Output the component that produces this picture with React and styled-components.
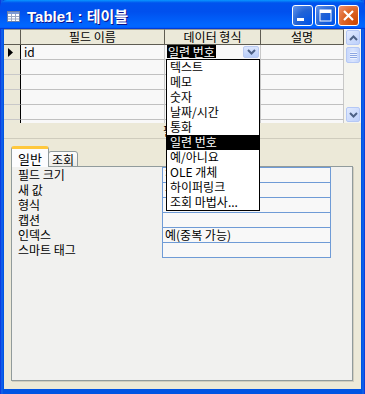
import React from "react";
import styled, { createGlobalStyle } from "styled-components";

const GlobalStyle = createGlobalStyle`
  html, body { margin: 0; padding: 0; background: #fff; }
  body {
    font-family: "Noto Sans CJK KR", "Liberation Sans", sans-serif;
    font-size: 12px;
    color: #000;
  }
`;

const types = ["텍스트", "메모", "숫자", "날짜/시간", "통화", "일련 번호", "예/아니요", "OLE 개체", "하이퍼링크", "조회 마법사..."];

const props = [
  { label: "필드 크기", value: "정수(Long)" },
  { label: "새 값", value: "증분" },
  { label: "형식", value: "" },
  { label: "캡션", value: "" },
  { label: "인덱스", value: "예(중복 가능)" },
  { label: "스마트 태그", value: "" },
];

const Chevron = ({ up }) => (
  <svg width="9" height="6" viewBox="0 0 9 6">
    <path d={up ? "M1 5 L4.5 1.5 L8 5" : "M1 1 L4.5 4.5 L8 1"} fill="none" stroke="#4d6185" strokeWidth="2" />
  </svg>
);

const App = () => {
  return (
    <>
      <GlobalStyle />
      <Window>
        <TitleBar>
          <TitleIcon width="13" height="11" viewBox="0 0 13 11">
            <rect x="0.5" y="0.5" width="12" height="10" fill="#fff" stroke="#6b7fa8" />
            <rect x="1" y="1" width="11" height="2" fill="#7d9ad6" />
            <path d="M1 5.5 H12 M1 8 H12 M4.5 3 V10 M8.5 3 V10" stroke="#9aa7c2" strokeWidth="1" />
          </TitleIcon>
          <Title>Table1 : 테이블</Title>
          <Buttons>
            <CapButton>
              <svg width="21" height="21" viewBox="0 0 21 21">
                <rect x="5" y="13" width="7" height="3" fill="#fff" />
              </svg>
            </CapButton>
            <CapButton>
              <svg width="21" height="21" viewBox="0 0 21 21">
                <rect x="5" y="5" width="11" height="11" fill="none" stroke="#fff" strokeWidth="1" />
                <rect x="5" y="5" width="11" height="3" fill="#fff" />
              </svg>
            </CapButton>
            <CapButton $close>
              <svg width="21" height="21" viewBox="0 0 21 21">
                <path d="M6 6 L15 15 M15 6 L6 15" stroke="#fff" strokeWidth="2.2" />
              </svg>
            </CapButton>
          </Buttons>
        </TitleBar>

        <Frame>
          <GridPane>
            <Table>
              <HeadCell />
              <HeadCell>필드 이름</HeadCell>
              <HeadCell>데이터 형식</HeadCell>
              <HeadCell>설명</HeadCell>
              {Array.from({ length: 6 }).map((_, i) => (
                <React.Fragment key={i}>
                  <Selector>
                    {i === 0 && (
                      <svg width="5" height="9" viewBox="0 0 5 9">
                        <path d="M0 0 L5 4.5 L0 9 Z" fill="#000" />
                      </svg>
                    )}
                  </Selector>
                  <Cell>{i === 0 ? "id" : ""}</Cell>
                  <Cell>
                    {i === 0 && (
                      <>
                        <Selected>일련 번호</Selected>
                        <ComboButton>
                          <Chevron />
                        </ComboButton>
                      </>
                    )}
                  </Cell>
                  <Cell />
                </React.Fragment>
              ))}
            </Table>
            <Scrollbar>
              <ScrollButton>
                <Chevron up />
              </ScrollButton>
              <Thumb>
                <Grip />
              </Thumb>
              <Track />
              <ScrollButton>
                <Chevron />
              </ScrollButton>
            </Scrollbar>
          </GridPane>

          <Caption>필드 속성</Caption>

          <Lower>
            <Tabs>
              <Tab $active>일반</Tab>
              <Tab>조회</Tab>
            </Tabs>
            <Panel>
              <PropGrid>
                {props.map((p, i) => (
                  <React.Fragment key={p.label}>
                    <PropLabel>{p.label}</PropLabel>
                    <PropValue $last={i === props.length - 1}>{p.value}</PropValue>
                  </React.Fragment>
                ))}
              </PropGrid>
            </Panel>
          </Lower>

          <DropList>
            {types.map((t) => (
              <DropItem key={t} $active={t === "일련 번호"}>{t}</DropItem>
            ))}
          </DropList>
        </Frame>
      </Window>
    </>
  );
};

export default App;

const Window = styled.div`
  width: 365px;
  height: 394px;
  box-sizing: border-box;
  display: flex;
  flex-direction: column;
  background: linear-gradient(90deg, #0831d9 0, #166aee 2px, #0054e3 3px, #0054e3 calc(100% - 3px), #166aee calc(100% - 2px), #0831d9 100%);
  padding: 0 4px 5px 4px;
  overflow: hidden;
`;

const TitleBar = styled.div`
  height: 29px;
  margin: 0 -4px;
  flex-shrink: 0;
  display: flex;
  align-items: center;
  padding: 0 6px 0 7px;
  border-radius: 7px 7px 0 0;
  background: linear-gradient(
    180deg,
    #0997ff 0%,
    #0053ee 10%,
    #0050ee 40%,
    #0066ff 85%,
    #0066ff 92%,
    #005bff 95%,
    #003dd7 97%,
    #003dd7 100%
  );
`;

const TitleIcon = styled.svg`
  margin-top: 3px;
  flex-shrink: 0;
`;

const Title = styled.div`
  margin-left: 7px;
  flex: 1;
  color: #fff;
  font-family: "Liberation Sans", "Noto Sans CJK KR", sans-serif;
  font-weight: bold;
  font-size: 15px;
  text-shadow: 1px 1px #0f1089;
  white-space: nowrap;
  margin-top: 2px;
`;

const Buttons = styled.div`
  display: flex;
  gap: 2px;
  margin-top: 2px;
`;

const CapButton = styled.div`
  width: 21px;
  height: 21px;
  box-sizing: border-box;
  border: 1px solid #fff;
  border-radius: 3px;
  overflow: hidden;
  display: flex;
  align-items: center;
  justify-content: center;
  background: ${(p) =>
    p.$close
      ? "radial-gradient(circle at 90% 90%, #cc4600 0%, #dc6527 55%, #f09270 100%)"
      : "radial-gradient(circle at 90% 90%, #0054e9 0%, #2263d5 55%, #6696eb 100%)"};
  svg {
    margin: -1px;
  }
`;

const Frame = styled.div`
  position: relative;
  flex: 1;
  display: flex;
  flex-direction: column;
  background: #ece9d8;
`;

const GridPane = styled.div`
  height: 94px;
  display: flex;
  overflow: hidden;
  flex-shrink: 0;
`;

const Table = styled.div`
  display: grid;
  grid-template-columns: 17px 144px 96px 83px;
  grid-auto-rows: 15px;
  grid-template-rows: 16px;
  align-content: start;
  background: #f8f8f8;
  height: 94px;
  overflow: hidden;
`;

const HeadCell = styled.div`
  box-sizing: border-box;
  background: #ebe9d9;
  border-right: 1px solid #5e5c52;
  border-bottom: 1px solid #5e5c52;
  border-top: 1px solid #9c9a8c;
  text-align: center;
  line-height: 14px;
  white-space: nowrap;
`;

const Selector = styled.div`
  box-sizing: border-box;
  background: #ebe9d9;
  border-right: 1px solid #000;
  border-bottom: 1px solid #c8c8c8;
  display: flex;
  align-items: center;
  padding-left: 4px;
`;

const Cell = styled.div`
  position: relative;
  box-sizing: border-box;
  border-right: 1px solid #c8c8c8;
  border-bottom: 1px solid #c0c0c0;
  line-height: 14px;
  padding-left: 3px;
  white-space: nowrap;
`;

const Selected = styled.span`
  display: inline-block;
  background: #000;
  color: #fff;
  line-height: 13px;
  padding: 0 1px;
  margin-left: -1px;
`;

const ComboButton = styled.div`
  position: absolute;
  right: 1px;
  top: 1px;
  width: 16px;
  height: 12px;
  box-sizing: border-box;
  border: 1px solid #b9c9ef;
  border-radius: 2px;
  background: linear-gradient(180deg, #dbe5fc, #b8cdf8);
  display: flex;
  align-items: center;
  justify-content: center;
`;

const Scrollbar = styled.div`
  width: 17px;
  height: 94px;
  box-sizing: border-box;
  padding: 1px 1px 1px 2px;
  background: #f4f4ef;
  display: flex;
  flex-direction: column;
  gap: 2px;
`;

const ScrollButton = styled.div`
  height: 15px;
  box-sizing: border-box;
  border: 1px solid #b5c8f5;
  border-radius: 2px;
  background: linear-gradient(135deg, #e1eafe, #bdd0fb);
  display: flex;
  align-items: center;
  justify-content: center;
  flex-shrink: 0;
`;

const Thumb = styled(ScrollButton)`
  height: 16px;
  background: linear-gradient(90deg, #c8d8fc, #d9e4fe 50%, #c2d4fb);
`;

const Grip = styled.div`
  width: 7px;
  height: 7px;
  background: repeating-linear-gradient(180deg, #eef3fe 0 1px, #8ca6e3 1px 2px);
`;

const Track = styled.div`
  flex: 1;
`;

const Caption = styled.div`
  height: 15px;
  line-height: 15px;
  text-align: center;
  padding-left: 8px;
  border-bottom: 1px solid #cfccbd;
`;

const Lower = styled.div`
  flex: 1;
  display: flex;
  flex-direction: column;
  padding: 8px 8px 8px 7px;
`;

const Tabs = styled.div`
  display: flex;
  align-items: flex-end;
  height: 20px;
  position: relative;
  z-index: 1;
  margin-bottom: -1px;
`;

const Tab = styled.div`
  box-sizing: border-box;
  height: ${(p) => (p.$active ? "21px" : "16px")};
  padding: ${(p) => (p.$active ? "2px 6px 0 6px" : "0 3px")};
  line-height: ${(p) => (p.$active ? "16px" : "15px")};
  font-size: ${(p) => (p.$active ? "13px" : "12px")};
  border: 1px solid #919b9c;
  border-bottom: ${(p) => (p.$active ? "none" : "1px solid #919b9c")};
  border-top: ${(p) => (p.$active ? "3px solid #ffc83c" : "1px solid #919b9c")};
  border-radius: 3px 3px 0 0;
  margin-left: ${(p) => (p.$active ? "0" : "-1px")};
  background: ${(p) => (p.$active ? "#fcfcfe" : "linear-gradient(180deg, #fefefe, #ecebe6)")};
`;

const Panel = styled.div`
  flex: 1;
  box-sizing: border-box;
  border: 1px solid #919b9c;
  background: #f1f1ef;
  box-shadow: 1px 1px 0 #d0cdbf;
`;

const PropGrid = styled.div`
  display: grid;
  grid-template-columns: 150px 169px;
  grid-auto-rows: 15px;
`;

const PropLabel = styled.div`
  padding-left: 6px;
  line-height: 16px;
  white-space: nowrap;
`;

const PropValue = styled.div`
  box-sizing: border-box;
  background: #f8f8f8;
  border: 1px solid #6f9bd6;
  border-bottom: ${(p) => (p.$last ? "1px solid #6f9bd6" : "none")};
  height: ${(p) => (p.$last ? "16px" : "15px")};
  line-height: 14px;
  padding-left: 2px;
  white-space: nowrap;
  overflow: hidden;
`;

const DropList = styled.div`
  position: absolute;
  left: 162px;
  top: 30px;
  width: 94px;
  box-sizing: border-box;
  border: 1px solid #000;
  background: #fff;
  z-index: 5;
`;

const DropItem = styled.div`
  height: 15px;
  line-height: 14px;
  padding-left: 3px;
  white-space: nowrap;
  background: ${(p) => (p.$active ? "#000" : "transparent")};
  color: ${(p) => (p.$active ? "#fff" : "#000")};
`;
